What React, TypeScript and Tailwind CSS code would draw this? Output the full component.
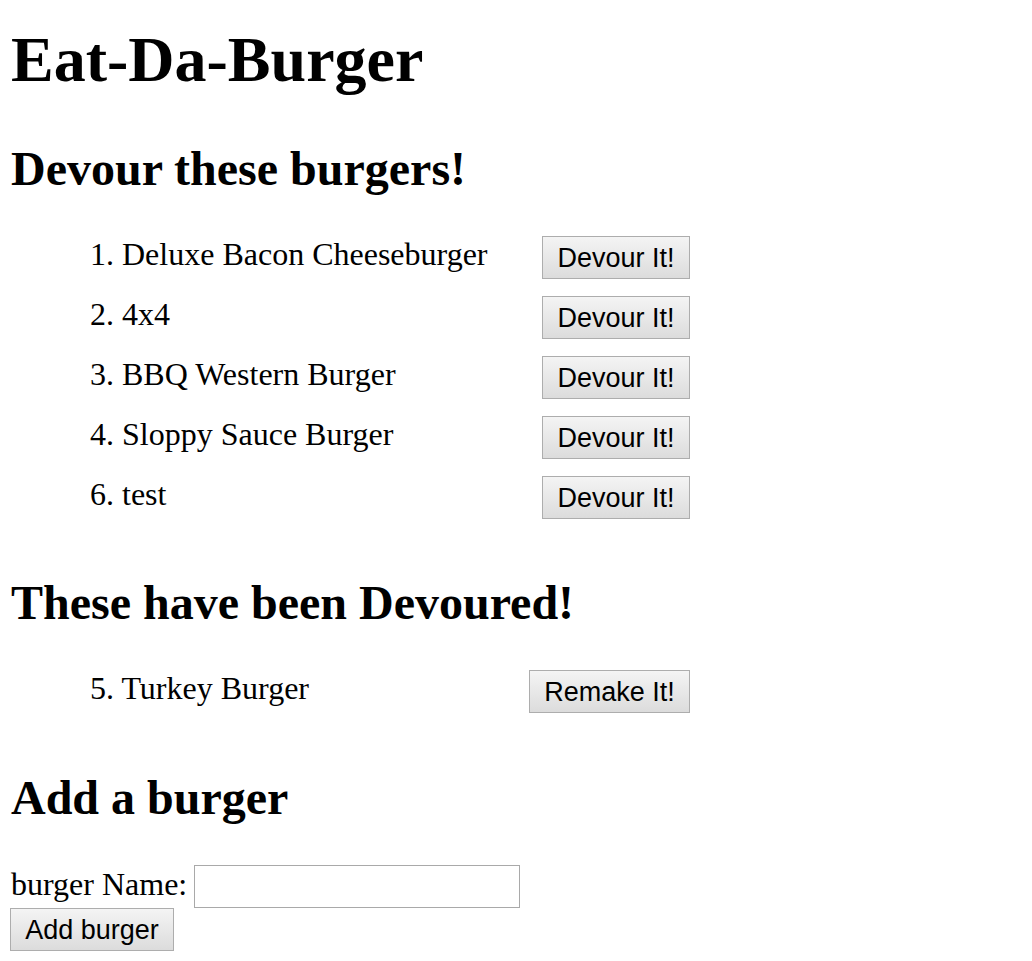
const devour = [
  { id: 1, name: "Deluxe Bacon Cheeseburger" },
  { id: 2, name: "4x4" },
  { id: 3, name: "BBQ Western Burger" },
  { id: 4, name: "Sloppy Sauce Burger" },
  { id: 6, name: "test" },
];

const devoured = [{ id: 5, name: "Turkey Burger" }];

function Btn({ label, w }: { label: string; w: string }) {
  return (
    <button
      type="button"
      className={`h-[43px] ${w} shrink-0 border border-[#adadad] bg-gradient-to-b from-[#f4f4f4] to-[#dcdcdc] text-[27px] leading-[30px] text-black font-['Liberation_Sans',Arial,sans-serif]`}
    >
      {label}
    </button>
  );
}

function Row({ id, name, btn, w }: { id: number; name: string; btn: string; w: string }) {
  return (
    <li className="flex h-[60px] w-[600px] items-start justify-between">
      <span className="text-[32px] leading-[36px]">
        {id}. {name}
      </span>
      <Btn label={btn} w={w} />
    </li>
  );
}

export default function App() {
  return (
    <div className="min-h-screen bg-white pl-[11px] text-black font-['Liberation_Serif','Times_New_Roman',serif]">
      <h1 className="pt-[28px] text-[64px] font-bold leading-[64px]">Eat-Da-Burger</h1>

      <h2 className="mt-[53px] text-[48px] font-bold leading-[48px]">Devour these burgers!</h2>
      <ul className="mt-[43px] pl-[79px]">
        {devour.map((b) => (
          <Row key={b.id} id={b.id} name={b.name} btn="Devour It!" w="w-[148px]" />
        ))}
      </ul>

      <h2 className="mt-[43px] text-[48px] font-bold leading-[48px]">These have been Devoured!</h2>
      <ul className="mt-[43px] pl-[79px]">
        {devoured.map((b) => (
          <Row key={b.id} id={b.id} name={b.name} btn="Remake It!" w="w-[161px]" />
        ))}
      </ul>

      <h2 className="mt-[44px] text-[48px] font-bold leading-[48px]">Add a burger</h2>
      <form className="mt-[43px]" onSubmit={(e) => e.preventDefault()}>
        <div className="flex items-start gap-[7px]">
          <label className="text-[32px] leading-[38px]">burger Name:</label>
          <input type="text" className="h-[43px] w-[326px] border border-[#a9a9a9] bg-white px-1 text-[26px] outline-none" />
        </div>
        <div className="-ml-px">
          <Btn label="Add burger" w="w-[164px]" />
        </div>
      </form>
    </div>
  );
}
